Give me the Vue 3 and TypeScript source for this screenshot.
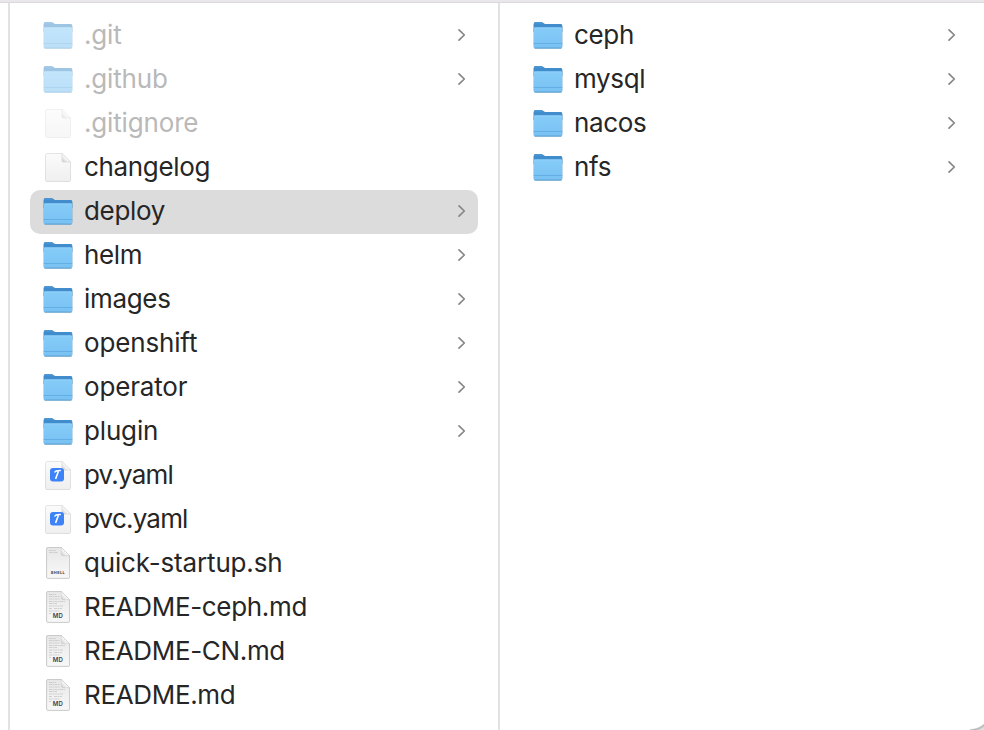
<script setup lang="ts">
type Kind = 'folder' | 'blank' | 'yaml' | 'shell' | 'md'

interface Entry {
  name: string
  kind: Kind
  hidden?: boolean
  selected?: boolean
  fit?: 'tight' | 'loose'
}

const columns: Entry[][] = [
  [
    { name: '.git', kind: 'folder', hidden: true, fit: 'loose' },
    { name: '.github', kind: 'folder', hidden: true, fit: 'loose' },
    { name: '.gitignore', kind: 'blank', hidden: true, fit: 'loose' },
    { name: 'changelog', kind: 'blank' },
    { name: 'deploy', kind: 'folder', selected: true },
    { name: 'helm', kind: 'folder' },
    { name: 'images', kind: 'folder' },
    { name: 'openshift', kind: 'folder', fit: 'loose' },
    { name: 'operator', kind: 'folder', fit: 'loose' },
    { name: 'plugin', kind: 'folder', fit: 'loose' },
    { name: 'pv.yaml', kind: 'yaml', fit: 'tight' },
    { name: 'pvc.yaml', kind: 'yaml', fit: 'tight' },
    { name: 'quick-startup.sh', kind: 'shell', fit: 'loose' },
    { name: 'README-ceph.md', kind: 'md' },
    { name: 'README-CN.md', kind: 'md' },
    { name: 'README.md', kind: 'md' },
  ],
  [
    { name: 'ceph', kind: 'folder' },
    { name: 'mysql', kind: 'folder' },
    { name: 'nacos', kind: 'folder' },
    { name: 'nfs', kind: 'folder' },
  ],
]
</script>

<template>
  <main class="browser">
    <svg class="defs" width="0" height="0" aria-hidden="true">
      <defs>
        <linearGradient id="folder-back" x1="0" y1="0" x2="0" y2="1">
          <stop offset="0" stop-color="#4f9ad8" />
          <stop offset="0.3" stop-color="#3f8acb" />
          <stop offset="0.6" stop-color="#4590ce" />
        </linearGradient>
        <linearGradient id="folder-front" x1="0" y1="0" x2="0" y2="1">
          <stop offset="0" stop-color="#92d2fa" />
          <stop offset="0.1" stop-color="#84cbf8" />
          <stop offset="1" stop-color="#78c1f2" />
        </linearGradient>
        <linearGradient id="paper" x1="0" y1="0" x2="0" y2="1">
          <stop offset="0" stop-color="#fbfbfb" />
          <stop offset="1" stop-color="#efefef" />
        </linearGradient>
        <linearGradient id="sheet" x1="0" y1="0" x2="0" y2="1">
          <stop offset="0" stop-color="#e6e6e6" />
          <stop offset="0.6" stop-color="#f2f2f2" />
          <stop offset="1" stop-color="#f7f7f7" />
        </linearGradient>
        <linearGradient id="fold" x1="0" y1="1" x2="1" y2="0">
          <stop offset="0" stop-color="#c8c8c8" />
          <stop offset="0.5" stop-color="#ffffff" />
        </linearGradient>
      </defs>
    </svg>

    <section v-for="(column, c) in columns" :key="c" class="column">
      <div
        v-for="entry in column"
        :key="entry.name"
        class="row"
        :class="{ hidden: entry.hidden, selected: entry.selected }"
      >
        <svg v-if="entry.kind === 'folder'" class="icon" viewBox="0 0 32 44">
          <g class="folder">
            <path d="M1.700 18V9.900Q1.700 8 3.600 8h5.600q1 0 1.800.7l1 .8q.8.6 1.800.6h14.600Q30.300 10.100 30.300 12v6z" fill="url(#folder-back)" />
            <path d="M1.700 14.800q0-1.500 1.500-1.500h25.600q1.500 0 1.500 1.500v18q0 1.600-1.600 1.600H3.300Q1.700 34.400 1.700 32.800z" fill="url(#folder-front)" />
          </g>
          <path d="M1.700 29.500h28.600" stroke="#5ba9e0" stroke-width="0.8" />
          <path d="M2.500 34h27" stroke="#5b9fcf" stroke-width="0.8" />
        </svg>

        <svg v-else-if="entry.kind === 'blank' || entry.kind === 'yaml'" class="icon" viewBox="0 0 32 44">
          <path class="paper" d="M5 7.500H20l8.500 8.500v18q0 1.500-1.500 1.500H5Q3.500 35.500 3.500 34V9q0-1.500 1.500-1.500z" fill="url(#paper)" />
          <path class="crease" d="M20 7.500V14.500q0 1.500 1.500 1.500h7z" fill="url(#fold)" />
          <template v-if="entry.kind === 'yaml'">
            <rect x="8" y="14" width="14" height="13.500" rx="3" fill="#3d82f6" />
            <path d="M12.600 18.500q1-2.200 6.200-2" class="tool-head" />
            <path d="M16.400 17.200 13.600 25" class="tool-handle" />
          </template>
        </svg>

        <svg v-else class="icon" viewBox="0 0 32 44">
          <path class="sheet" d="M6 5.500h13.300l8.200 8.200V35q0 1.300-1.300 1.300H6Q4.700 36.300 4.700 35V6.800Q4.700 5.500 6 5.500z" fill="url(#sheet)" />
          <path v-if="entry.kind === 'shell'" class="lines" d="M7 8.500h7M7 10.500h8.500" />
          <path
            v-else
            class="lines"
            d="M7 8.500h7M7 10.500h11M7 13h11M7 15.500h16M7 17.500h8M7 20h14M7 22.500h3m2 0h8M7 25h11M7 27.500h2"
          />
          <path class="crease" d="M19.300 5.500V12.200q0 1.500 1.500 1.500h6.700z" fill="url(#fold)" />
          <text v-if="entry.kind === 'shell'" class="badge badge-shell" x="16" y="32">SHELL</text>
          <text v-else class="badge" x="16" y="32.400">MD</text>
        </svg>

        <span class="name" :class="entry.fit">{{ entry.name }}</span>

        <svg v-if="entry.kind === 'folder'" class="chevron" viewBox="0 0 10 14">
          <path d="M2 1.900 7.300 7 2 12.100" />
        </svg>
      </div>
    </section>
    <span class="corner" />
  </main>
</template>

<style>
body {
  margin: 0;
  background: #fff;
}
</style>

<style scoped>
.browser {
  position: relative;
  box-sizing: border-box;
  width: 984px;
  height: 730px;
  padding-left: 8px;
  display: flex;
  overflow: hidden;
  background: #fff;
  border-top: 2px solid #e9e7ea;
  box-shadow: inset 0 1px #dad9db;
  font-family: Inter, "Liberation Sans", sans-serif;
  color: #262626;
}
.defs {
  position: absolute;
}
.column {
  box-sizing: border-box;
  flex: 0 0 490px;
  margin-top: 1px;
  padding: 11px 20px 0;
  border-left: 2px solid #e2e2e2;
}
.row {
  box-sizing: border-box;
  display: flex;
  align-items: center;
  height: 44px;
  padding: 0 11px 0 12px;
  border-radius: 10px;
}
.selected {
  background: #dcdcdc;
}
.icon {
  flex: none;
  width: 32px;
  height: 44px;
}
.hidden .icon {
  opacity: 0.5;
}
.name {
  flex: 1;
  margin: 0 0 2px 10px;
  font-size: 26px;
  line-height: 42px;
  letter-spacing: -0.33px;
  white-space: nowrap;
}
.name.loose {
  letter-spacing: -0.16px;
}
.name.tight {
  letter-spacing: -0.8px;
}
.hidden .name {
  color: #b9b9b9;
}
.chevron {
  flex: none;
  width: 10px;
  height: 14px;
  margin-top: -2px;
  fill: none;
  stroke: #868686;
  stroke-width: 1.7;
  stroke-linecap: round;
  stroke-linejoin: round;
}
.folder {
  filter: drop-shadow(0 0.6px 0.5px rgba(50, 60, 70, 0.5));
}
.paper,
.sheet {
  filter: drop-shadow(0 0.5px 0.7px rgba(0, 0, 0, 0.4));
}
.sheet {
  stroke: #c9c9c9;
  stroke-width: 0.5;
}
.crease {
  stroke: #c8c8c8;
  stroke-width: 0.5;
}
.lines {
  fill: none;
  stroke: #c6c6c6;
  stroke-width: 0.8;
  stroke-dasharray: 3 0.5 1.5 0.5;
}
.tool-head,
.tool-handle {
  fill: none;
  stroke: #fff;
  stroke-width: 1.6;
}
.badge {
  font-size: 6px;
  font-weight: 600;
  letter-spacing: 0.4px;
  text-anchor: middle;
  fill: #3f3f3f;
}
.badge-shell {
  font-size: 4px;
  font-weight: 700;
}
.corner {
  position: absolute;
  right: 0;
  bottom: 0;
  width: 14px;
  height: 10px;
  background: radial-gradient(circle at 0 -12px, transparent 20.500px, #b4b4b4 22px, #dedede 24px);
}
</style>
